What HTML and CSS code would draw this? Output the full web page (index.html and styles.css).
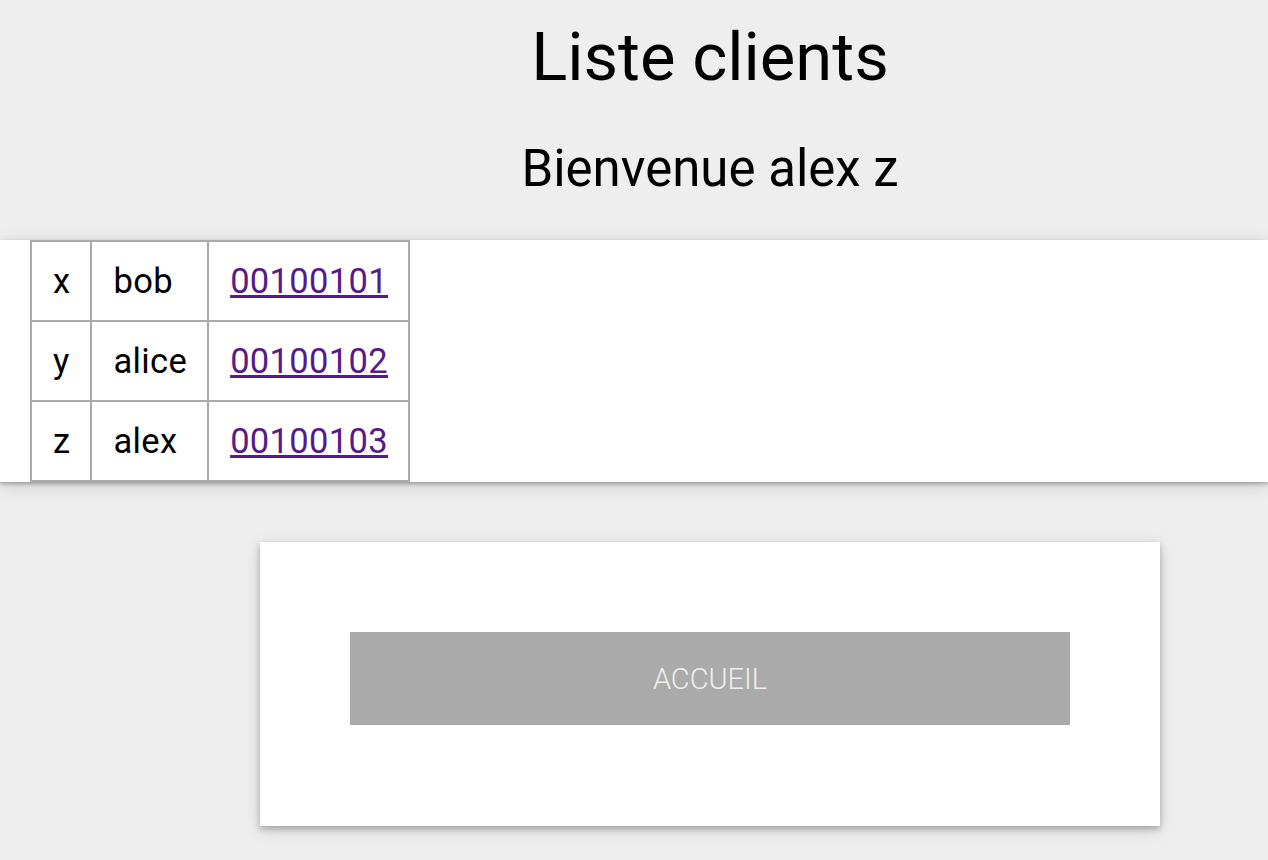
FILE: index.html
```html
<!DOCTYPE html>
<html lang="fr">
<head>
<meta charset="utf-8">
<title>Liste clients</title>
<link rel="stylesheet" href="styles.css">
</head>
<body>
<header class="head">
  <h1 class="title">Liste clients</h1>
  <h2 class="welcome">Bienvenue alex z</h2>
</header>
<section class="band">
  <table class="clients">
    <tr><td>x</td><td>bob</td><td><a class="acct" href="#">00100101</a></td></tr>
    <tr><td>y</td><td>alice</td><td><a class="acct" href="#">00100102</a></td></tr>
    <tr><td>z</td><td>alex</td><td><a class="acct" href="#">00100103</a></td></tr>
  </table>
</section>
<main class="main">
  <div class="card">
    <button class="btn" type="button">ACCUEIL</button>
  </div>
</main>
</body>
</html>
```

FILE: styles.css
```css
html, body {
  margin: 0;
  padding: 0;
  background: #eeeeee;
  font-family: Roboto, "Liberation Sans", sans-serif;
  color: #000;
}

.head {
  padding-left: 152px;
  text-align: center;
}

.title {
  margin: 0;
  padding-top: 18px;
  font-size: 67px;
  line-height: 78px;
  font-weight: 400;
}

.welcome {
  margin: 43px 0 41px;
  font-size: 51px;
  line-height: 60px;
  font-weight: 400;
}

.band {
  background: #fff;
  padding-left: 30px;
  box-shadow: 0 2px 4px rgba(0, 0, 0, 0.28), 0 4px 18px rgba(0, 0, 0, 0.14);
  position: relative;
}

.clients {
  border-collapse: collapse;
  margin-bottom: -2px;
  position: relative;
}

.clients td {
  border: 2px solid #aaaaaa;
  padding: 20px 20px 20px 21px;
  font-size: 34.5px;
  line-height: 38px;
  letter-spacing: 0.35px;
  white-space: nowrap;
}

.acct {
  color: #551a8b;
  text-decoration: underline;
}

.main {
  padding: 62px 0 40px 152px;
  display: flex;
  justify-content: center;
}

.card {
  width: 720px;
  background: #fff;
  padding: 90px 90px 101px;
  box-shadow: 0 3px 6px rgba(0, 0, 0, 0.25), 0 4px 18px rgba(0, 0, 0, 0.12);
}

.btn {
  display: block;
  width: 100%;
  height: 93px;
  border: 0;
  margin: 0;
  background: #aaaaaa;
  color: #eeeeee;
  font-family: Roboto, "Liberation Sans", sans-serif;
  font-weight: 300;
  font-size: 29px;
  padding: 0;
}
```
